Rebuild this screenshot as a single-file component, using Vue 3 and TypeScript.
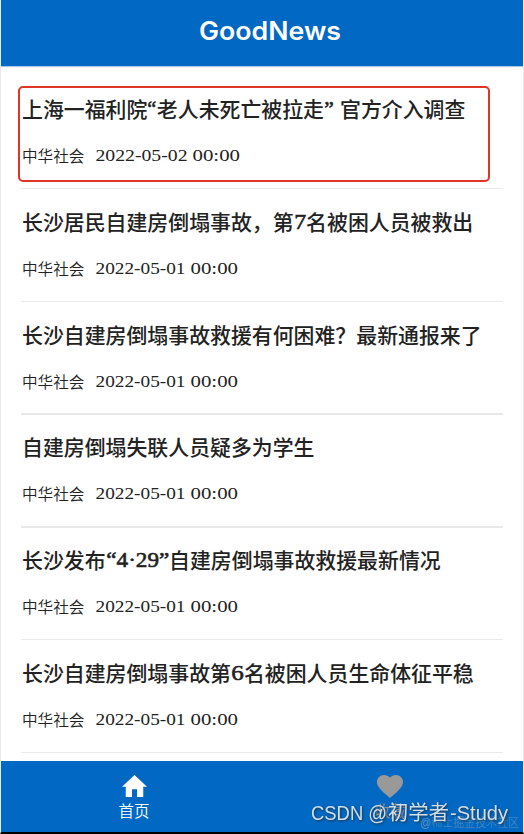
<script setup lang="ts">
interface Part {
  text: string
  width?: number
}
interface News {
  title: Part[]
  day: string
  dayWidth: number
  marked?: boolean
  heavy?: boolean
}

const news: News[] = [
  {
    title: [
      { text: '上海一福利院' },
      { text: '“', width: 9.5 },
      { text: '老人未死亡被拉走' },
      { text: '”', width: 16 },
      { text: '官方介入调查' },
    ],
    day: '2022-05-02',
    dayWidth: 92,
    marked: true,
  },
  {
    title: [{ text: '长沙居民自建房倒塌事故，第' }, { text: '7', width: 12.5 }, { text: '名被困人员被救出' }],
    day: '2022-05-01',
    dayWidth: 90,
  },
  { title: [{ text: '长沙自建房倒塌事故救援有何困难？最新通报来了' }], day: '2022-05-01', dayWidth: 90, heavy: true },
  { title: [{ text: '自建房倒塌失联人员疑多为学生' }], day: '2022-05-01', dayWidth: 90, heavy: true },
  {
    title: [{ text: '长沙发布' }, { text: '“4·29”', width: 63.5 }, { text: '自建房倒塌事故救援最新情况' }],
    day: '2022-05-01',
    dayWidth: 90,
  },
  {
    title: [{ text: '长沙自建房倒塌事故第' }, { text: '6', width: 13 }, { text: '名被困人员生命体征平稳' }],
    day: '2022-05-01',
    dayWidth: 90,
  },
]

const glyphWidth = (part: Part): number => (part.text === '”' ? 9.5 : (part.width ?? 0) - 0.5)
</script>

<template>
  <div class="app">
    <header class="bar">
      <svg class="brand" width="142" height="34">
        <text x="1" y="25" textLength="142" lengthAdjust="spacingAndGlyphs">GoodNews</text>
      </svg>
    </header>

    <main class="list">
      <article v-for="(item, i) in news" :key="i" class="item" :class="{ heavy: item.heavy }">
        <h2 class="title">
          <template v-for="(part, j) in item.title" :key="j">
            <svg v-if="part.width" class="latin" :width="part.width" height="28">
              <text x="0.3" y="22" :textLength="glyphWidth(part)" lengthAdjust="spacingAndGlyphs">{{ part.text }}</text>
            </svg>
            <span v-else>{{ part.text }}</span>
          </template>
        </h2>
        <div class="meta">
          <span>中华社会</span>
          <svg class="date" width="146" height="20">
            <text x="0.5" y="15" :textLength="item.dayWidth" lengthAdjust="spacingAndGlyphs">{{ item.day }}</text>
            <text :x="item.dayWidth + 5.5" y="15" textLength="47.5" lengthAdjust="spacingAndGlyphs">00:00</text>
          </svg>
        </div>
        <div v-if="item.marked" class="mark"></div>
      </article>
    </main>

    <nav class="tabs">
      <a class="tab">
        <svg width="25" height="22" viewBox="2 3 20 17" preserveAspectRatio="none"><path d="M10 20v-6h4v6h5v-8h3L12 3 2 12h3v8z" /></svg>
        <span>首页</span>
      </a>
      <a class="tab off">
        <svg width="26" height="23" viewBox="2 3 20 18.35" preserveAspectRatio="none"><path d="M12 21.35l-1.45-1.32C5.4 15.36 2 12.28 2 8.5 2 5.42 4.42 3 7.5 3c1.74 0 3.41.81 4.5 2.09C13.09 3.81 14.76 3 16.5 3 19.58 3 22 5.42 22 8.5c0 3.78-3.4 6.86-8.55 11.54z" /></svg>
        <span>收藏</span>
      </a>
    </nav>
    <svg class="stamp faint" width="102" height="20">
      <text x="0" y="14" textLength="99" lengthAdjust="spacingAndGlyphs">@稀土掘金技术社区</text>
    </svg>
    <svg class="stamp" width="202" height="28">
      <text x="0" y="20" textLength="76" lengthAdjust="spacingAndGlyphs">CSDN @</text>
      <text class="cn" x="77" y="20" textLength="61" lengthAdjust="spacingAndGlyphs">初学者</text>
      <text x="139" y="20" textLength="58" lengthAdjust="spacingAndGlyphs">-Study</text>
    </svg>
  </div>
</template>

<style>
body {
  margin: 0;
  background: #fff;
}
</style>

<style scoped>
.app {
  position: relative;
  box-sizing: border-box;
  width: 524px;
  height: 834px;
  display: flex;
  flex-direction: column;
  overflow: hidden;
  border-left: 1px solid #e9e9e9;
  border-right: 1px solid #e9e9e9;
  border-bottom: 2px solid #000;
  background: #fff;
  font-family: "Noto Sans CJK SC", sans-serif;
  color: #222;
}
.bar {
  flex: none;
  height: 66px;
  box-sizing: border-box;
  padding: 15px 0 0 197px;
  background: #0168c3;
  box-shadow: 0 1px 1px #a8c8e4;
}
.brand {
  display: block;
  overflow: visible;
  fill: #fff;
  font: 600 25px Inter, sans-serif;
}
.list {
  flex: 1;
  min-height: 0;
  padding: 10px 20px 0;
}
.item {
  position: relative;
  box-sizing: border-box;
  height: 112.75px;
  padding: 18px 0 0 1px;
  border-bottom: 1px solid #e9e9e9;
}
.item.heavy {
  height: 113.5px;
  margin-bottom: -0.75px;
  border-bottom-width: 2px;
}
.title {
  display: flex;
  margin: 0;
  height: 28px;
  line-height: 28px;
  font-size: 20.9px;
  font-weight: 500;
  white-space: nowrap;
}
.latin {
  flex: none;
  overflow: visible;
  font: 400 22px "Liberation Serif", serif;
  fill: #222;
  stroke: #222;
  stroke-width: 0.6px;
}
.meta {
  display: flex;
  margin-top: 21px;
  height: 24px;
  line-height: 24px;
  font-size: 15.6px;
  font-weight: 350;
}
.date {
  margin: 3px 0 0 11px;
  font: 16px "Liberation Serif", serif;
  fill: #222;
}
.mark {
  position: absolute;
  left: -3px;
  top: 10px;
  width: 468px;
  height: 92px;
  border: 2px solid #e03426;
  border-radius: 5px;
}
.tabs {
  flex: none;
  height: 71px;
  display: flex;
  padding: 0 5px;
  background: #0168c3;
}
.tab {
  flex: 1;
  display: flex;
  flex-direction: column;
  justify-content: space-between;
  align-items: center;
  padding: 14px 0 11px;
  color: #fff;
  font-size: 15.5px;
  font-weight: 350;
  line-height: 21px;
}
.tab svg {
  fill: currentColor;
}
.off {
  color: #999;
}
.stamp {
  position: absolute;
  left: 310px;
  top: 800px;
  font: 300 20px "Liberation Sans", "Noto Sans CJK SC", sans-serif;
  fill: #d0dfed;
  filter: drop-shadow(1px 1px 1px #234);
}
.cn {
  font-weight: 400;
}
.faint {
  left: 419px;
  top: 813px;
  font-size: 12px;
  fill: #5c8fbb;
  filter: none;
}
</style>
